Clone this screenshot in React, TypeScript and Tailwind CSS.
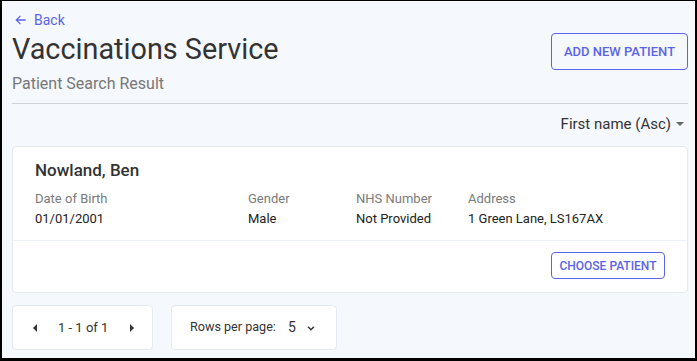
import React from "react";

const Caret = ({ className }: { className?: string }) => (
  <svg viewBox="0 0 10 5" className={className} fill="currentColor">
    <path d="M0 0h10L5 5z" />
  </svg>
);

function Field({ label, value, className }: { label: string; value: string; className?: string }) {
  return (
    <div className={className}>
      <div className="text-[13px] leading-[18px] text-[#7a7a7a]">{label}</div>
      <div className="text-[13px] leading-[18px] text-[#222] mt-[2px]">{value}</div>
    </div>
  );
}

export default function App() {
  return (
    <div
      className="w-[697px] h-[361px] overflow-hidden bg-[#f5f8fd] border-black border-l-2 border-r-2 border-t border-b-[3px] pl-[10px] pr-[7px] text-[#333]"
      style={{ fontFamily: "Roboto, 'Liberation Sans', sans-serif" }}
    >
      <a className="flex items-center gap-[6px] text-[14px] leading-[20px] text-[#5b63e8] mt-[9px] ml-[2px] w-fit cursor-pointer">
        <svg viewBox="0 0 24 24" className="w-[14px] h-[14px]" fill="none" stroke="currentColor" strokeWidth={2.2}>
          <path d="M20 12H5M11 5l-7 7 7 7" />
        </svg>
        Back
      </a>

      <div className="flex justify-between items-start">
        <div>
          <h1 className="text-[28.8px] leading-[38px] text-[#333] font-normal">Vaccinations Service</h1>
          <p className="text-[16px] leading-[22px] text-[#777] mt-[5px]">Patient Search Result</p>
        </div>
        <button className="mt-[3px] h-[37px] w-[137px] whitespace-nowrap border border-[#5b63e8] rounded-[4px] text-[13px] font-medium text-[#5b63e8] uppercase bg-transparent">
          Add New Patient
        </button>
      </div>

      <div className="h-px bg-[#cfd2d6] mt-[8px]" />

      <div className="flex justify-end items-center gap-[5px] mt-[10px] pr-[4px] text-[15px] leading-[20px] text-[#333]">
        First name (Asc)
        <Caret className="w-[8px] h-[4px] text-[#666]" />
      </div>

      <div className="mt-[12px] bg-white border border-[#e4e9f2] rounded-[4px]">
        <div className="px-[22px] pt-[12px] pb-[12px]">
          <div className="text-[17px] leading-[22px] font-medium text-[#333]">Nowland, Ben</div>
          <div className="flex mt-[9px]">
            <Field label="Date of Birth" value="01/01/2001" className="w-[213px]" />
            <Field label="Gender" value="Male" className="w-[108px]" />
            <Field label="NHS Number" value="Not Provided" className="w-[112px]" />
            <Field label="Address" value="1 Green Lane, LS167AX" />
          </div>
        </div>
        <div className="border-t border-[#eef1f6] flex justify-end px-[22px] pt-[11px] pb-[13px]">
          <button className="h-[27px] w-[114px] whitespace-nowrap border border-[#5b63e8] rounded-[4px] text-[12px] font-medium text-[#5b63e8] uppercase bg-transparent">
            Choose Patient
          </button>
        </div>
      </div>

      <div className="flex gap-[18px] mt-[12px]">
        <div className="w-[141px] h-[45px] bg-white border border-[#e4e9f2] rounded-[4px] flex items-center text-[13px] text-[#333]">
          <Caret className="w-[8px] h-[4px] rotate-90 text-[#333] ml-[18px]" />
          <span className="ml-[19px]">1 - 1 of 1</span>
          <Caret className="w-[8px] h-[4px] -rotate-90 text-[#333] ml-[20px]" />
        </div>
        <div className="w-[166px] h-[45px] bg-white border border-[#e4e9f2] rounded-[4px] flex items-center pl-[18px] text-[12.6px] text-[#333]">
          <span>Rows per page:</span>
          <span className="ml-[12px] text-[14px]">5</span>
          <svg viewBox="0 0 24 24" className="w-[10px] h-[10px] ml-[10px]" fill="none" stroke="#333" strokeWidth={3.5}>
            <path d="M5 9l7 7 7-7" />
          </svg>
        </div>
      </div>
    </div>
  );
}
